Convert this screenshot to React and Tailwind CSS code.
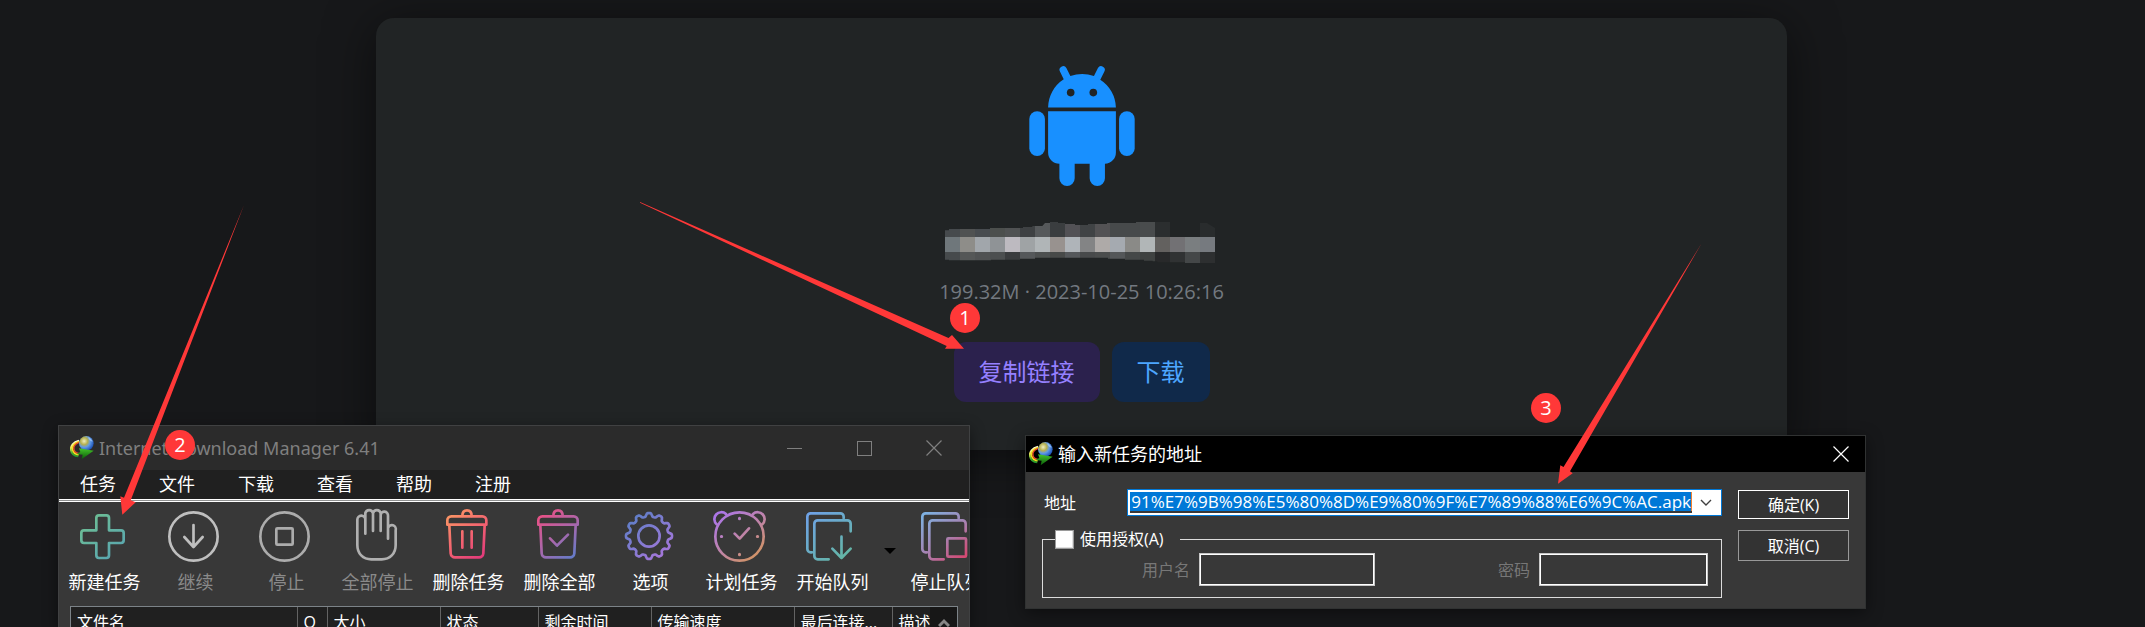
import React from "react";

const SANS = "font-['Open_Sans','Noto_Sans_CJK_SC',sans-serif]";

function AndroidLogo() {
  return (
    <svg width="106" height="120" viewBox="387 77 318 361" fill="#1890ff" aria-hidden="true">
      <path d="M444 202a102 102 0 0 1 47-85l-11-23a10.500 10.500 0 0 1 19-11l12 24a110 110 0 0 1 71 0l12-24a10.500 10.500 0 0 1 19 11l-12 24a102 102 0 0 1 47 84z" />
      <circle cx="512" cy="157" r="11.500" fill="#212425" />
      <circle cx="580" cy="157" r="11.500" fill="#212425" />
      <path d="M444 213h204v124a34 34 0 0 1-33 34v44a22.500 22.500 0 0 1-46 0v-44h-45v44a22.500 22.500 0 0 1-46 0v-44a34 34 0 0 1-34-34z" />
      <rect x="387.500" y="213" width="47" height="135" rx="23.500" />
      <rect x="657.500" y="213" width="47" height="135" rx="23.500" />
    </svg>
  );
}

const MOSAIC = [
  ["#464a4d", "#6f777b", "#464a4c"],
  ["#505252", "#8e8d89", "#555757"],
  ["#484c50", "#a1a6ab", "#505253"],
  ["#4c4f4d", "#8f9396", "#4c4f50"],
  ["#505253", "#bdbac0", "#3a3c3e"],
  ["#3e4143", "#9fa3a5", "#55585a"],
  ["#56595b", "#b0b5b7", "#4d5050"],
  ["#3a3d3f", "#98928f", "#484a49"],
  ["#525155", "#afb4b9", "#55585b"],
  ["#404345", "#838485", "#484a4b"],
  ["#535254", "#aeaaa8", "#4b4d4d"],
  ["#474a4b", "#a5aab0", "#545759"],
  ["#474a4b", "#8a8a87", "#454848"],
  ["#494c4d", "#b1b6b7", "#3f4241"],
  ["#2b2e2f", "#63615f", "#28292a"],
  ["#212425", "#727174", "#303233"],
  ["#212425", "#7a7e80", "#444748"],
  ["#292c2d", "#767a7f", "#2d2f30"],
];

function MaskedName() {
  return (
    <svg width="270" height="41" viewBox="135 546 810 123" role="img" aria-label="文件名已隐藏" shapeRendering="crispEdges">
      <clipPath id="mask">
        <path d="M135 571h12v-4h123v-3h99v-3h28v-3h30l8-9h15v-3h24v3h21v3h30v3h39v-3h57v-3h87v-3h192v3h21l24 15v105H855v-2h-83v-3h-14v-2h-26v-3h-57v-3h-51v-3H405v3h-45v3h-87v2H147v-2h-12z" />
      </clipPath>
      <g clipPath="url(#mask)">
        {MOSAIC.map((c, i) => (
          <g key={i}>
            <rect x={135 + i * 45} y="546" width="45" height="45" fill={c[0]} />
            <rect x={135 + i * 45} y="591" width="45" height="45" fill={c[1]} />
            <rect x={135 + i * 45} y="636" width="45" height="33" fill={c[2]} />
          </g>
        ))}
      </g>
    </svg>
  );
}

function IdmLogo() {
  return (
    <svg width="24" height="24" viewBox="0 0 72 72" fill="none" aria-hidden="true">
      <defs>
        <radialGradient id="globe" cx="0.35" cy="0.35" r="0.7">
          <stop offset="0" stopColor="#eeeec0" />
          <stop offset="0.35" stopColor="#b5b04e" />
          <stop offset="0.6" stopColor="#5f9ae8" />
          <stop offset="1" stopColor="#1a4fb4" />
        </radialGradient>
        <linearGradient id="leaf" x1="0" y1="0" x2="0" y2="1">
          <stop offset="0" stopColor="#43c62a" />
          <stop offset="1" stopColor="#0a5a08" />
        </linearGradient>
        <linearGradient id="ring" x1="0" y1="14" x2="0" y2="64" gradientUnits="userSpaceOnUse">
          <stop offset="0" stopColor="#fff6ea" />
          <stop offset="0.4" stopColor="#f3ea5a" />
          <stop offset="0.75" stopColor="#3fae2c" />
          <stop offset="1" stopColor="#1f8f2a" />
        </linearGradient>
      </defs>
      <path d="M27 14C10 18 1 30 3 43c2 10 10 17 22 18" stroke="url(#ring)" strokeWidth="6" />
      <path d="M27 17C14 21 6 30 8 42c2 8 8 13 18 14" stroke="#f4e21e" strokeWidth="5" />
      <path d="M27 19C17 23 10 31 12 40c1 6 6 11 14 12" stroke="#e5482a" strokeWidth="4" />
      <circle cx="49" cy="22" r="22" fill="url(#globe)" />
      <path d="M54 4c7 2 12 7 14 13-6 0-12-5-14-13z" fill="#a9cdf8" opacity="0.7" />
      <path d="M27 37l44 7-36 26 3-14-19-2 12-6z" fill="url(#leaf)" />
    </svg>
  );
}

function Grad({ id, from, mid, to, x }) {
  return (
    <linearGradient id={id} gradientUnits="userSpaceOnUse" x1={x + 25} y1="310" x2={x + 137} y2="450">
      <stop offset="0" stopColor={from} />
      {mid && <stop offset="0.5" stopColor={mid} />}
      <stop offset="1" stopColor={to} />
    </linearGradient>
  );
}

function ToolIcon({ x, children }) {
  return (
    <svg
      className="mr-[3px] shrink-0"
      width="54"
      height="54"
      viewBox={`${x} 294 162 162`}
      fill="none"
      strokeWidth="8"
      strokeLinecap="round"
      strokeLinejoin="round"
      aria-hidden="true"
    >
      {children}
    </svg>
  );
}

function gearPath(cx, cy) {
  const pts = [];
  for (let i = 0; i <= 144; i++) {
    const a = (i / 144) * Math.PI * 2;
    const r = 63.5 + 5.5 * Math.tanh(2 * Math.cos(12 * a)) * 1.03;
    pts.push(`${(cx + r * Math.sin(a)).toFixed(1)} ${(cy - r * Math.cos(a)).toFixed(1)}`);
  }
  return `M${pts.join("L")}Z`;
}

const TOOLS = [
  {
    label: "新建任务",
    icon: (
      <ToolIcon x={108}>
        <Grad id="g-add" x={108} from="#6fc191" to="#57a3b4" />
        <path
          stroke="url(#g-add)"
          d="M177 316h22a8 8 0 0 1 8 8v37h36a8 8 0 0 1 8 8v22a8 8 0 0 1-8 8h-36v37a8 8 0 0 1-8 8h-22a8 8 0 0 1-8-8v-37h-37a8 8 0 0 1-8-8v-22a8 8 0 0 1 8-8h37v-37a8 8 0 0 1 8-8z"
        />
      </ToolIcon>
    ),
  },
  {
    label: "继续",
    disabled: true,
    icon: (
      <ToolIcon x={381}>
        <g stroke="#bfbfbf">
          <circle cx="460.500" cy="379.500" r="72.500" />
          <path d="M460.500 345v66M433 381l27.500 30L488 381" />
        </g>
      </ToolIcon>
    ),
  },
  {
    label: "停止",
    disabled: true,
    icon: (
      <ToolIcon x={654}>
        <g stroke="#acacac">
          <circle cx="733.500" cy="379.500" r="72.500" />
          <rect x="709" y="355" width="49" height="49" rx="3" />
        </g>
      </ToolIcon>
    ),
  },
  {
    label: "全部停止",
    disabled: true,
    icon: (
      <ToolIcon x={927}>
        <path
          stroke="#b0b0b0"
          d="M976 371v-42a12 12 0 0 0-24 0v76c0 26 17 43 42 43h31c25 0 42-17 42-43v-44a12 12 0 0 0-23-7v32v-69a11 11 0 0 0-22-2v48v-54a12 12 0 0 0-23 0v54v-54a12 12 0 0 0-23 0z"
        />
      </ToolIcon>
    ),
  },
  {
    label: "删除任务",
    icon: (
      <ToolIcon x={1200}>
        <Grad id="g-del" x={1200} from="#fb9764" mid="#f26370" to="#e0337d" />
        <g stroke="url(#g-del)">
          <path d="M1267 318c0-10 5-17 14-17s14 7 14 17" />
          <path d="M1234 319h93a12 12 0 0 1 12 12v13h-117v-13a12 12 0 0 1 12-12z" />
          <path d="M1228 346l4 84a13 13 0 0 0 13 12h72a13 13 0 0 0 13-12l4-84M1267 364v49M1295 364v49" />
        </g>
      </ToolIcon>
    ),
  },
  {
    label: "删除全部",
    icon: (
      <ToolIcon x={93}>
        <Grad id="g-all" x={93} from="#ee4f83" mid="#a967ab" to="#5a7fce" />
        <g stroke="url(#g-all)">
          <path d="M160 318c0-10 5-17 14-17s14 7 14 17" />
          <path d="M127 319h94a12 12 0 0 1 12 12v13H115v-13a12 12 0 0 1 12-12z" />
          <path d="M121 346l4 84a13 13 0 0 0 13 12h72a13 13 0 0 0 13-12l4-84M150 385l21 22 33-33" />
        </g>
      </ToolIcon>
    ),
  },
  {
    label: "选项",
    icon: (
      <ToolIcon x={366}>
        <Grad id="g-opt" x={366} from="#5a7fc6" to="#ad76dd" />
        <g stroke="url(#g-opt)">
          <path d={gearPath(447, 378)} />
          <circle cx="447" cy="378" r="32" />
        </g>
      </ToolIcon>
    ),
  },
  {
    label: "计划任务",
    icon: (
      <ToolIcon x={639}>
        <Grad id="g-sch" x={639} from="#ac76e6" mid="#bf84a8" to="#d4965c" />
        <g stroke="url(#g-sch)">
          <circle cx="718.500" cy="379.500" r="72.500" />
          <path d="M650 343a16 16 0 1 1 28-31M787 343a16 16 0 1 0-28-31M704 371l15 15 28-31" />
          <path d="M718.500 325v1M718.500 433v1M664 379.500h1M772 379.500h1" strokeWidth="9" />
        </g>
      </ToolIcon>
    ),
  },
  {
    label: "开始队列",
    menu: true,
    icon: (
      <ToolIcon x={912}>
        <Grad id="g-run" x={912} from="#6ea2e4" to="#63b8a0" />
        <g stroke="url(#g-run)">
          <path d="M936 427h-4a10 10 0 0 1-10-10v-97a10 10 0 0 1 10-10h89a10 10 0 0 1 10 10v5" />
          <path d="M986 448h-33a10 10 0 0 1-10-10v-97a10 10 0 0 1 10-10h89a10 10 0 0 1 10 10v23" />
          <path d="M1024.500 380v64M997 416l27.500 28 27.500-28" />
        </g>
      </ToolIcon>
    ),
  },
  {
    label: "停止队列",
    icon: (
      <ToolIcon x={1254}>
        <Grad id="g-end" x={1254} from="#7eb0e0" mid="#a584b4" to="#d9456e" />
        <g stroke="url(#g-end)">
          <path d="M1281 427h-4a10 10 0 0 1-10-10v-97a10 10 0 0 1 10-10h89a10 10 0 0 1 10 10v5" />
          <path d="M1331 448h-33a10 10 0 0 1-10-10v-97a10 10 0 0 1 10-10h89a10 10 0 0 1 10 10v23" />
          <rect x="1342" y="385" width="56" height="55" rx="3" />
        </g>
      </ToolIcon>
    ),
  },
];

const COLUMNS = [
  ["文件名", "w-[226px]"],
  ["Q", "w-[30px]"],
  ["大小", "w-[113px]"],
  ["状态", "w-[98px]"],
  ["剩余时间", "w-[113px]"],
  ["传输速度", "w-[143px]"],
  ["最后连接...", "w-[98px]"],
  ["描述", "w-[38px]"],
];

function CloseGlyph() {
  return (
    <svg width="16" height="16" viewBox="0 0 16 16" stroke="currentColor" strokeWidth="1.200" aria-hidden="true">
      <path d="M0.500 0.500l15 15M15.500 0.500l-15 15" />
    </svg>
  );
}

function ManagerWindow() {
  return (
    <section className="absolute bottom-0 left-[58px] top-[425px] flex w-[912px] flex-col overflow-hidden border border-b-0 border-[#404142] bg-[#383838] shadow-[0_4px_14px_rgba(0,0,0,0.45)]">
      <header className="flex h-11 shrink-0 items-center bg-[#2b2b2b] pl-[11px] text-[#7f7f7f]">
        <IdmLogo />
        <h2 className="ml-[5px] flex-1 font-['Noto_Sans',sans-serif] text-[18px]">Internet Download Manager 6.41</h2>
        <button className="flex h-full w-[70px] items-center justify-center" aria-label="最小化">
          <span className="h-px w-[15px] bg-current" />
        </button>
        <button className="flex h-full w-[70px] items-center justify-center" aria-label="最大化">
          <span className="size-[15px] border border-current" />
        </button>
        <button className="flex h-full w-[70px] items-center justify-center" aria-label="关闭">
          <CloseGlyph />
        </button>
      </header>
      <nav className="flex h-[29px] shrink-0 items-center gap-[43px] bg-[#202020] pl-[21px] text-[18px] text-white">
        {["任务", "文件", "下载", "查看", "帮助", "注册"].map((m) => (
          <button key={m}>{m}</button>
        ))}
      </nav>
      <div className="h-[3px] shrink-0 border-y border-white bg-[#8f9090]" />
      <div className="flex shrink-0 overflow-hidden pb-3 pt-[6px]">
        {TOOLS.map((t) => (
          <React.Fragment key={t.label}>
            <button
              aria-disabled={t.disabled}
              className={`flex w-[91px] shrink-0 flex-col items-center gap-2 whitespace-nowrap text-[18px] leading-6 ${
                t.disabled ? "text-[#8a8a8a]" : "text-white"
              }`}
            >
              {t.icon}
              <span>{t.label}</span>
            </button>
            {t.menu && (
              <button className="flex w-[23px] shrink-0 items-center justify-center" aria-label="选择队列">
                <svg width="12" height="7" viewBox="0 0 12 7" aria-hidden="true">
                  <path d="M0 0h12L6 6z" fill="#000" />
                </svg>
              </button>
            )}
          </React.Fragment>
        ))}
      </div>
      <div className="mx-[11px] flex h-[60px] shrink-0 border border-[#7c8388] bg-[#202020]">
        <table className="h-[30px] w-[859px] table-fixed border-collapse text-[16px] text-white">
          <thead>
            <tr>
              {COLUMNS.map(([name, width]) => (
                <th
                  key={name}
                  className={`${width} overflow-hidden whitespace-nowrap border-r border-[#636363] p-0 pl-[6px] text-left font-normal last:border-r-0`}
                >
                  {name}
                </th>
              ))}
            </tr>
          </thead>
        </table>
        <div className="flex flex-1 justify-center bg-[#171717] pt-[11px]">
          <svg width="12" height="9" viewBox="0 0 12 9" fill="none" stroke="#868686" strokeWidth="3" aria-hidden="true">
            <path d="M1 8l5-5 5 5" />
          </svg>
        </div>
      </div>
    </section>
  );
}

const FIELD = "h-[33px] min-w-0 border border-[#c8c8c8] bg-[#383838] px-1 text-[16px] text-white shadow-[inset_0_0_0_1px_#fff] outline-none";

function AddressDialog() {
  return (
    <section
      role="dialog"
      aria-label="输入新任务的地址"
      className="absolute left-[1025px] top-[435px] w-[841px] border border-[#303232] bg-[#383838] text-white shadow-[0_4px_16px_rgba(0,0,0,0.45)]"
    >
      <header className="flex h-9 items-center bg-black pl-[3px] pr-4">
        <IdmLogo />
        <h2 className="ml-[5px] flex-1 text-[18px]">输入新任务的地址</h2>
        <button aria-label="关闭">
          <CloseGlyph />
        </button>
      </header>
      <div className="flex gap-4 pb-[10px] pl-4 pr-4 pt-[17px] text-[16px]">
        <div className="flex-1">
          <div className="flex h-[27px] items-center pl-[2px]">
            <label htmlFor="url" className="w-[83px]">
              地址
            </label>
            <div className="flex h-[27px] flex-1 border border-[#0078d7] bg-white p-[2px]">
              <div className="flex min-w-0 flex-1 bg-[#383838] pb-[2px]">
                <input
                  id="url"
                  type="text"
                  defaultValue="91%E7%9B%98%E5%80%8D%E9%80%9F%E7%89%88%E6%9C%AC.apk"
                  className="min-w-0 flex-1 border-r border-[#f08030] bg-[#0078d7] text-right text-[17px] leading-5 text-white outline-none"
                />
              </div>
              <button className="flex w-[27px] items-center justify-center text-[#404040]" aria-label="历史地址">
                <svg width="12" height="8" viewBox="0 0 12 8" fill="none" stroke="currentColor" strokeWidth="1.400" aria-hidden="true">
                  <path d="M1 1l5 5 5-5" />
                </svg>
              </button>
            </div>
          </div>
          <fieldset className="mt-[13px] h-[69px] border border-[#dcdcdc] pl-3">
            <legend className="flex h-5 items-center gap-[6px] pr-4">
              <input
                id="auth"
                type="checkbox"
                className="size-[19px] appearance-none border border-[#9a9a9a] bg-white shadow-[inset_-1px_-1px_0_#e0e0e0]"
              />
              <label htmlFor="auth">使用授权(A)</label>
            </legend>
            <div className="flex items-center pr-[13px] pt-1 text-[#777]">
              <label htmlFor="user" className="ml-[87px]">
                用户名
              </label>
              <input id="user" type="text" className={`${FIELD} ml-[9px] w-[176px]`} />
              <label htmlFor="pass" className="ml-auto">
                密码
              </label>
              <input id="pass" type="password" className={`${FIELD} ml-[9px] w-[169px]`} />
            </div>
          </fieldset>
        </div>
        <div className="flex w-[111px] flex-col gap-[11px] pt-px">
          <button className="h-[29px] border border-white bg-[#333]">确定(K)</button>
          <button className="h-[31px] border border-[#999] bg-[#333]">取消(C)</button>
        </div>
      </div>
    </section>
  );
}

function Annotations() {
  return (
    <div className="pointer-events-none absolute inset-0">
      <svg className="absolute left-0 top-0" width="2145" height="627" viewBox="0 0 2145 627" fill="#ff3838" aria-hidden="true">
        <path d="M640 202l308.500 136 3.500-3 12 13.700h-19l1.700-2.700L640 202.700z" />
        <path d="M244 205L124 497.700l-3.700-1.400 2 18.400 13.400-12.400-5-2z" />
        <path d="M1701.500 243.500L1563.500 467l-3.200-1.700-2.300 18.400 14.700-10.400-2.700-2z" />
      </svg>
      <span className="absolute left-[950px] top-[303px] flex size-[30px] items-center justify-center rounded-full bg-[#ff3838] text-[20px] leading-none text-white">
        1
      </span>
      <span className="absolute left-[165px] top-[430px] flex size-[30px] items-center justify-center rounded-full bg-[#ff3838] text-[20px] leading-none text-white">
        2
      </span>
      <span className="absolute left-[1531px] top-[393px] flex size-[30px] items-center justify-center rounded-full bg-[#ff3838] text-[20px] leading-none text-white">
        3
      </span>
    </div>
  );
}

export default function App() {
  return (
    <div className={`relative h-screen overflow-hidden bg-[#17181a] pl-[376px] pr-[358px] pt-[18px] ${SANS}`}>
      <main className="flex flex-col items-center rounded-t-[18px] bg-[#212425] pb-12 pt-12 shadow-[0_8px_50px_rgba(0,0,0,0.5)]">
        <AndroidLogo />
        <div className="mt-9 pr-1">
          <MaskedName />
        </div>
        <p className="mt-[14px] text-[20px] leading-[30px] text-[#737980]">199.32M · 2023-10-25 10:26:16</p>
        <div className="mt-[35px] flex gap-3 text-[24px]">
          <button className="h-[60px] rounded-xl bg-[#2b214d] px-[25px] text-[#9580ff]">复制链接</button>
          <button className="h-[60px] rounded-xl bg-[#10294a] px-[25px] text-[#4da6ff]">下载</button>
        </div>
      </main>
      <ManagerWindow />
      <AddressDialog />
      <Annotations />
    </div>
  );
}
